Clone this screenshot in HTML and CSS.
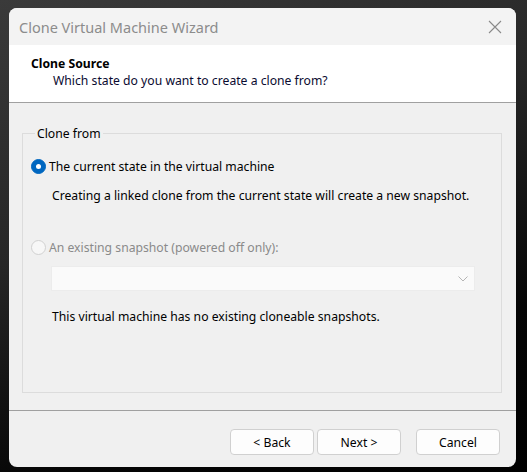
FILE: index.html
```html
<!DOCTYPE html>
<html lang="en">
<head>
    <meta charset="UTF-8">
    <title>Clone Virtual Machine Wizard</title>
    <link rel="stylesheet" href="styles.css">
</head>
<body>
    <div class="window">
        <div class="titlebar">
            <span class="title">Clone Virtual Machine Wizard</span>
            <svg class="close" width="14" height="14" viewBox="0 0 14 14">
                <path d="M1 1 L13 13 M13 1 L1 13" stroke="#8a8a8a" stroke-width="1.1" fill="none"/>
            </svg>
        </div>

        <div class="banner">
            <h1>Clone Source</h1>
            <p>Which state do you want to create a clone from?</p>
        </div>

        <div class="body">
            <fieldset class="group">
                <legend>Clone from</legend>

                <label class="radio checked">
                    <span class="dot"></span>
                    The current state in the virtual machine
                </label>
                <p class="note">Creating a linked clone from the current state will create a new snapshot.</p>

                <label class="radio disabled">
                    <span class="dot"></span>
                    An existing snapshot (powered off only):
                </label>
                <div class="select">
                    <svg width="10" height="6" viewBox="0 0 10 6">
                        <path d="M0.5 0.5 L5 5 L9.5 0.5" stroke="#b5b5b5" stroke-width="1" fill="none"/>
                    </svg>
                </div>
                <p class="note empty">This virtual machine has no existing cloneable snapshots.</p>
            </fieldset>
        </div>

        <div class="footer">
            <button>&lt; Back</button>
            <button>Next &gt;</button>
            <button class="cancel">Cancel</button>
        </div>
    </div>
</body>
</html>
```

FILE: styles.css
```css
html, body {
    margin: 0;
    height: 100%;
}
body {
    background: linear-gradient(160deg, #3a3a3a 0%, #262626 40%, #050505 75%, #000 100%);
    font-family: "Noto Sans", "Open Sans", sans-serif;
    font-size: 12.2px;
    color: #000;
    padding: 8px 11px 5px 9px;
    box-sizing: border-box;
}
.window {
    width: 507px;
    height: 459px;
    background: #f0f0f0;
    border-radius: 8px;
    overflow: hidden;
    display: flex;
    flex-direction: column;
}
.titlebar {
    height: 37px;
    background: #f3f3f3;
    display: flex;
    align-items: center;
    justify-content: space-between;
    padding: 0 14px 0 10px;
}
.title {
    color: #8c8c8c;
    font-size: 14.5px;
    padding-top: 1px;
}
.close {
    margin-top: 1px;
}
.banner {
    background: #fff;
    height: 58px;
    border-bottom: 1px solid #a0a0a0;
    padding: 11px 0 0 22px;
    box-sizing: border-box;
}
.banner h1 {
    margin: 0;
    font-size: 12.2px;
    font-weight: bold;
    line-height: 16px;
}
.banner p {
    margin: 0;
    padding-left: 22px;
    line-height: 18px;
    color: #0a0a30;
}
.body {
    flex: 1;
    padding: 22px 14px 17px 13px;
    border-bottom: 1px solid #a0a0a0;
    display: flex;
}
.group {
    flex: 1;
    margin: 0;
    border: 1px solid #dcdcdc;
    padding: 15px 0 0 8px;
}
.group legend {
    padding: 0 2px;
    margin-left: 4px;
}
.radio {
    display: flex;
    align-items: center;
    gap: 3px;
    height: 18px;
}
.dot {
    width: 15px;
    height: 15px;
    border-radius: 50%;
    box-sizing: border-box;
}
.checked .dot {
    background: #0067c0;
    border: 1px solid #0067c0;
    position: relative;
}
.checked .dot::after {
    content: "";
    position: absolute;
    left: 4px;
    top: 4px;
    width: 5px;
    height: 5px;
    border-radius: 50%;
    background: #fff;
}
.disabled {
    color: #8a8a8a;
}
.disabled .dot {
    border: 1px solid #d0d0d0;
    background: #f7f7f7;
}
.note {
    margin: 12px 0 33px 21px;
    line-height: 18px;
}
.select {
    margin: 10px 26px 0 20px;
    height: 23px;
    background: #fafafa;
    border: 1px solid #ececec;
    display: flex;
    align-items: center;
    justify-content: flex-end;
    padding-right: 6px;
}
.note.empty {
    margin-top: 17px;
}
.footer {
    height: 56px;
    display: flex;
    justify-content: flex-end;
    align-items: flex-start;
    padding: 18px 16px 0 0;
    box-sizing: border-box;
    gap: 3px;
}
.footer button {
    width: 84px;
    height: 26px;
    background: #fdfdfd;
    border: 1px solid #d0d0d0;
    border-radius: 4px;
    font-family: inherit;
    font-size: 12.2px;
    color: #000;
    padding: 0;
}
.footer .cancel {
    margin-left: 12px;
}
```
